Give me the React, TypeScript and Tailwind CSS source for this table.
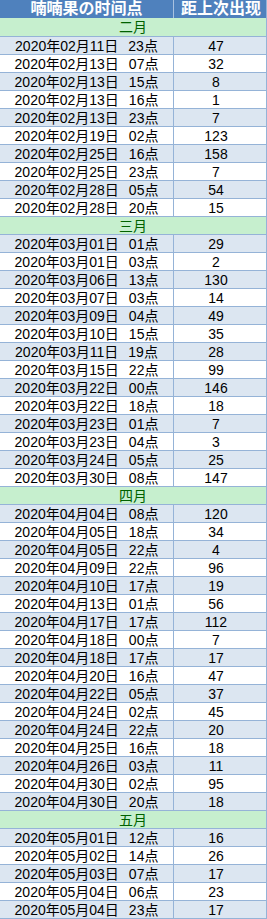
import React from "react";

type Row = [string, string, string];

const months: { name: string; rows: Row[] }[] = [
  {
    name: "二月",
    rows: [
      ["2020年02月11日", "23点", "47"],
      ["2020年02月13日", "07点", "32"],
      ["2020年02月13日", "15点", "8"],
      ["2020年02月13日", "16点", "1"],
      ["2020年02月13日", "23点", "7"],
      ["2020年02月19日", "02点", "123"],
      ["2020年02月25日", "16点", "158"],
      ["2020年02月25日", "23点", "7"],
      ["2020年02月28日", "05点", "54"],
      ["2020年02月28日", "20点", "15"],
    ],
  },
  {
    name: "三月",
    rows: [
      ["2020年03月01日", "01点", "29"],
      ["2020年03月01日", "03点", "2"],
      ["2020年03月06日", "13点", "130"],
      ["2020年03月07日", "03点", "14"],
      ["2020年03月09日", "04点", "49"],
      ["2020年03月10日", "15点", "35"],
      ["2020年03月11日", "19点", "28"],
      ["2020年03月15日", "22点", "99"],
      ["2020年03月22日", "00点", "146"],
      ["2020年03月22日", "18点", "18"],
      ["2020年03月23日", "01点", "7"],
      ["2020年03月23日", "04点", "3"],
      ["2020年03月24日", "05点", "25"],
      ["2020年03月30日", "08点", "147"],
    ],
  },
  {
    name: "四月",
    rows: [
      ["2020年04月04日", "08点", "120"],
      ["2020年04月05日", "18点", "34"],
      ["2020年04月05日", "22点", "4"],
      ["2020年04月09日", "22点", "96"],
      ["2020年04月10日", "17点", "19"],
      ["2020年04月13日", "01点", "56"],
      ["2020年04月17日", "17点", "112"],
      ["2020年04月18日", "00点", "7"],
      ["2020年04月18日", "17点", "17"],
      ["2020年04月20日", "16点", "47"],
      ["2020年04月22日", "05点", "37"],
      ["2020年04月24日", "02点", "45"],
      ["2020年04月24日", "22点", "20"],
      ["2020年04月25日", "16点", "18"],
      ["2020年04月26日", "03点", "11"],
      ["2020年04月30日", "02点", "95"],
      ["2020年04月30日", "20点", "18"],
    ],
  },
  {
    name: "五月",
    rows: [
      ["2020年05月01日", "12点", "16"],
      ["2020年05月02日", "14点", "26"],
      ["2020年05月03日", "07点", "17"],
      ["2020年05月04日", "06点", "23"],
      ["2020年05月04日", "23点", "17"],
    ],
  },
];

const font = {
  fontFamily: '"Liberation Sans", "Noto Sans CJK SC", sans-serif',
};

export default function App() {
  return (
    <div
      className="w-[267px] h-[919px] bg-white text-black overflow-hidden"
      style={font}
    >
      <div className="border-r border-[#95b3d7]">
        <div className="grid grid-cols-[174px_1fr] h-[18px] bg-[#4f81bd] text-white font-bold text-[16px] leading-none">
          <div className="flex items-center justify-center border-r border-[#a9c1e0]">
            喃喃果の时间点
          </div>
          <div className="flex items-center justify-center pl-[2px]">
            距上次出现
          </div>
        </div>
        {months.map((m, mi) => (
          <div key={m.name}>
            <div
              className={`flex items-center justify-center bg-[#c6efce] text-[#006100] text-[14px] leading-none border-b border-[#95b3d7] ${
                mi === 0 ? "h-[19px]" : "h-[18px]"
              }`}
            >
              {m.name}
            </div>
            {m.rows.map((r, i) => (
              <div
                key={i}
                className={`grid grid-cols-[174px_1fr] h-[18px] border-b border-[#95b3d7] text-[14px] leading-none ${
                  i % 2 === 0 ? "bg-[#dce6f1]" : "bg-white"
                }`}
              >
                <div className="flex items-center justify-center border-r border-[#95b3d7] whitespace-pre">
                  <span>{r[0]}</span>
                  <span className="ml-[10px]">{r[1]}</span>
                </div>
                <div className="flex items-center justify-center pr-[8px]">
                  {r[2]}
                </div>
              </div>
            ))}
          </div>
        ))}
      </div>
    </div>
  );
}
